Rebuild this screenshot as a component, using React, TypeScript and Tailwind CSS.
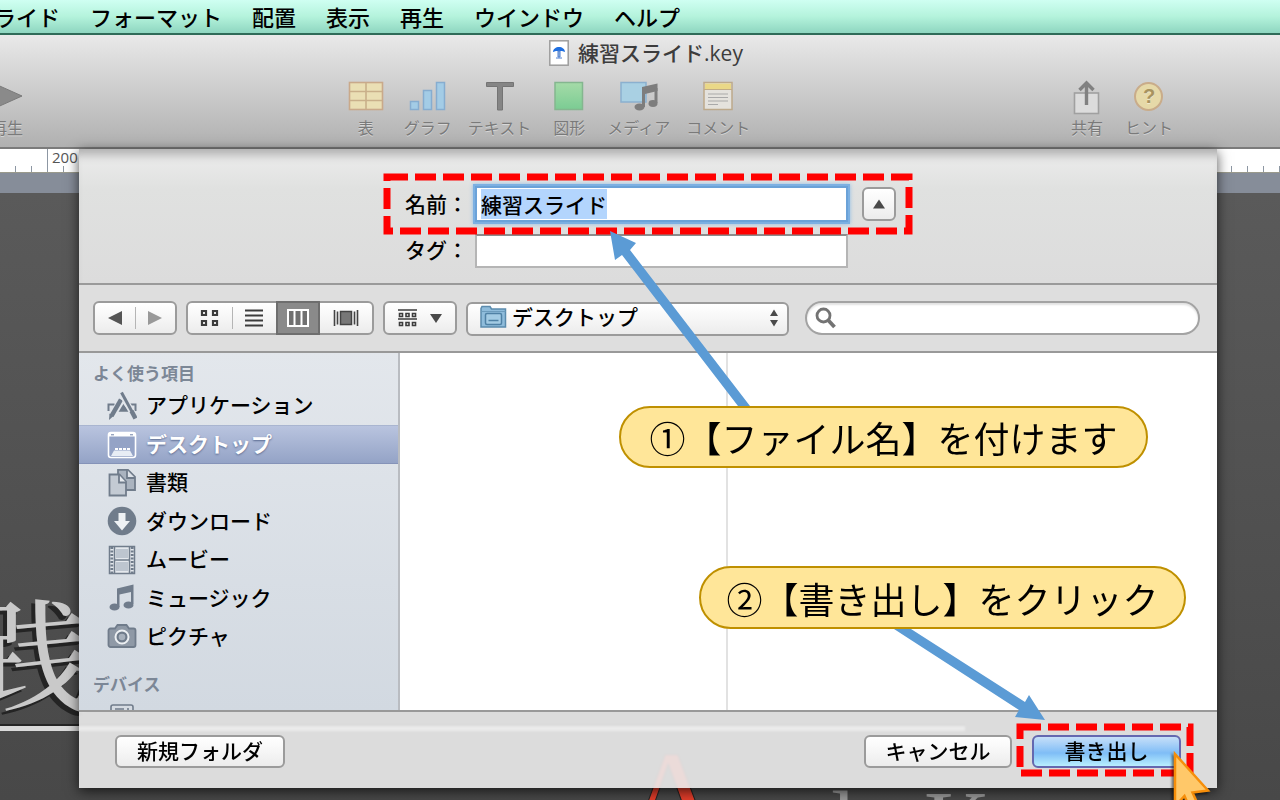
import { useEffect, useRef, useState } from 'react';
import type { ReactNode } from 'react';

const menus = ['スライド', 'フォーマット', '配置', '表示', '再生', 'ウインドウ', 'ヘルプ'];

const buttonStyle =
  'rounded-md border-2 border-[#9b9b9b] bg-linear-to-b from-white via-[#f6f6f6] to-[#ececec]';

function ToolItem({ label, children }: { label: string; children: ReactNode }) {
  return (
    <button className="flex min-w-11 flex-col items-center gap-[5px] text-base leading-5 text-[#7a7a7a] [text-shadow:0_1px_0_#ffffff70]">
      <span className="flex h-8 items-center justify-center">{children}</span>
      {label}
    </button>
  );
}

function TableIcon() {
  return (
    <svg width="36" height="32" viewBox="0 0 36 32">
      <rect x="1.5" y="2.5" width="33" height="27" fill="#eadfb4" stroke="#c9a98a" strokeWidth="1.6" />
      <path d="M2 11.5h32M2 20.5h32M18 3v26" stroke="#c9b08a" strokeWidth="1.6" />
    </svg>
  );
}

function ChartIcon() {
  return (
    <svg width="38" height="32" viewBox="0 0 38 32" fill="#a3cce6" stroke="#86add0" strokeWidth="1.5">
      <rect x="1.5" y="21.5" width="8" height="8" />
      <rect x="14.5" y="10.5" width="8" height="19" />
      <rect x="27.5" y="2.5" width="8" height="27" />
    </svg>
  );
}

function MediaIcon() {
  return (
    <svg width="40" height="32" viewBox="0 0 40 32">
      <rect x="2" y="2.5" width="25" height="19.5" fill="#a9d0e3" stroke="#8bb0cf" strokeWidth="1.5" />
      <path d="M23 7 38.500 3.500V11L26 14V27h-3z" fill="#7d7d7d" />
      <path d="M35.500 8h3v15h-3z" fill="#7d7d7d" />
      <ellipse cx="20.500" cy="27" rx="5" ry="3.400" fill="#7d7d7d" />
      <ellipse cx="34" cy="23.500" rx="4.500" ry="3.400" fill="#7d7d7d" />
    </svg>
  );
}

function CommentIcon() {
  return (
    <svg width="32" height="32" viewBox="0 0 32 32">
      <rect x="2" y="2.500" width="28" height="27" fill="#e4e2dd" stroke="#bda98b" strokeWidth="1.500" />
      <rect x="3" y="3.500" width="26" height="5.500" fill="#ead887" />
      <path d="M2 9.500h28" stroke="#c2ac85" />
      <path d="M6 14h20M6 17.500h20M6 21h20M6 24.500h10" stroke="#a9a9a9" strokeWidth="1.200" />
    </svg>
  );
}

function ShareIcon() {
  return (
    <svg width="30" height="36" viewBox="0 0 30 36" className="-mb-1">
      <rect x="2.500" y="13" width="24" height="20.500" fill="#dcdcdc" stroke="#a0a0a0" strokeWidth="1.600" />
      <path d="M14.500 25V4M7.500 10l7-7 7 7" fill="none" stroke="#818181" strokeWidth="3.400" />
    </svg>
  );
}

function Toolbar() {
  return (
    <header className="border-b-2 border-[#7b7b7b] bg-linear-to-b from-[#e9e9e9] to-[#b0b0b0] pb-2.5">
      <div className="flex h-9 items-center justify-center gap-[9px] pl-3">
        <svg width="20" height="26" viewBox="0 0 20 26">
          <rect x="0.800" y="0.800" width="18.400" height="24.400" fill="#fff" stroke="#9d9d9d" strokeWidth="1.500" />
          <path d="M4 12c0-3 3-5 6-5s6 2 6 5l-3-1H7z" fill="#1f6fe0" />
          <path d="M9 11h2v6H9zM7 18h6" stroke="#4c7fd0" strokeWidth="1" fill="#9db8dc" />
        </svg>
        <h1 className="pb-0.5 text-[21px] leading-8 font-medium text-[#3c3c3c]">
          練習スライド<span className="font-['Open_Sans']">.key</span>
        </h1>
      </div>
      <div className="mt-[9px] -ml-[15px] flex pr-[107px]">
        <ToolItem label="再生">
          <svg width="36" height="32" viewBox="0 0 36 32">
            <path d="M4 3v26L33 16z" fill="#8a8a8a" stroke="#7a7a7a" />
          </svg>
        </ToolItem>
        <nav className="mx-auto flex gap-4">
          <ToolItem label="表"><TableIcon /></ToolItem>
          <ToolItem label="グラフ"><ChartIcon /></ToolItem>
          <ToolItem label="テキスト">
            <svg width="30" height="32" viewBox="0 0 30 32">
              <path d="M1.500 2.500h27v4h-11V30h-5V6.500h-11z" fill="#858585" stroke="#747474" />
            </svg>
          </ToolItem>
          <ToolItem label="図形">
            <svg width="30" height="32" viewBox="0 0 30 32">
              <defs>
                <linearGradient id="shape" x2="0" y2="1">
                  <stop stopColor="#a5dba8" />
                  <stop offset="1" stopColor="#7bcc93" />
                </linearGradient>
              </defs>
              <rect x="1" y="2.500" width="27.500" height="27" fill="url(#shape)" stroke="#84b68f" strokeWidth="1.500" />
            </svg>
          </ToolItem>
          <ToolItem label="メディア"><MediaIcon /></ToolItem>
          <ToolItem label="コメント"><CommentIcon /></ToolItem>
        </nav>
        <div className="flex gap-4">
          <ToolItem label="共有"><ShareIcon /></ToolItem>
          <ToolItem label="ヒント">
            <span className="flex size-[29px] items-center justify-center rounded-full border-2 border-[#c9ac8a] bg-[#e6d9a8] font-['Liberation_Sans'] text-xl font-bold text-[#a8935f]">
              ?
            </span>
          </ToolItem>
        </div>
      </div>
    </header>
  );
}

function Canvas() {
  return (
    <div className="absolute inset-0 flex flex-col overflow-hidden">
      <div className="relative h-6 border-b border-[#9a9a8c] bg-white pl-[47px]">
        <div className="h-full border-l border-[#8d97a3] pl-1 font-['Open_Sans'] text-[15px] leading-4 text-[#555]">200</div>
        <div className="absolute inset-x-0 bottom-0 h-1.5 bg-[repeating-linear-gradient(90deg,transparent_0_15px,#8d97a3_15px_16px)]" />
      </div>
      <div className="h-5 bg-[#868d99]" />
      <div className="relative flex-1 bg-linear-to-b from-[#5a5a5a] to-[#484848]">
        <div className="absolute top-[376px] -left-[31px] text-[122px] leading-[160px] font-medium text-[#c9c9c9] [font-family:'Noto_Serif_CJK_JP','Noto_Sans_CJK_JP',serif] [text-shadow:-4px_4px_0_#242424]">
          践
        </div>
        <div className="absolute top-[531px] left-0 h-[7px] w-[965px] border-t-2 border-[#262626] bg-[#dadada]" />
        <svg className="absolute inset-0 h-full w-full font-['Liberation_Serif']">
          <text x="622" y="654" fontSize="140" fill="#e23d2a" stroke="#242424">A</text>
          <text x="831" y="661" fontSize="92" fill="#9a9a9a">l</text>
          <text x="924" y="661" fontSize="92" fill="#9a9a9a">K</text>
        </svg>
      </div>
    </div>
  );
}

function DashedFrame() {
  return (
    <svg className="pointer-events-none absolute inset-0 h-full w-full overflow-visible p-[3px]">
      <rect width="100%" height="100%" fill="none" stroke="#ff0000" strokeWidth="7" strokeDasharray="21 7" />
    </svg>
  );
}

function NameFields() {
  const nameRef = useRef<HTMLInputElement>(null);
  const [name, setName] = useState('練習スライド');
  const [tag, setTag] = useState('');

  useEffect(() => {
    nameRef.current?.focus();
    nameRef.current?.select();
  }, []);

  return (
    <div className="border-b-2 border-[#9a9a9a] bg-linear-to-b from-[#ededed] via-[#e0e1e0] via-30% to-[#dcdcdc] pt-[25px] pb-[15px] shadow-[inset_0_12px_10px_-6px_#b0b0b0]">
      <div className="relative mx-auto flex h-[60px] w-[528px] items-center pl-[21px]">
        <label htmlFor="name" className="w-[70px] font-medium">名前：</label>
        <input
          id="name"
          ref={nameRef}
          value={name}
          onChange={(e) => setName(e.target.value)}
          className="h-9 w-[373px] border-2 border-[#6ba2d8] bg-white px-1 leading-7 font-medium shadow-[0_0_0_2px_#7cb0e2,0_0_4px_2px_#8fbce6] outline-none selection:bg-[#b3d5fd] selection:text-black"
        />
        <button aria-label="折りたたむ" className={`ml-3.5 flex size-[34px] items-center justify-center ${buttonStyle}`}>
          <svg width="12" height="10" viewBox="0 0 12 10"><path d="M0 9.500 6 .500l6 9z" fill="#4a4a4a" /></svg>
        </button>
        <DashedFrame />
      </div>
      <div className="mx-auto flex w-[528px] items-center pl-[21px]">
        <label htmlFor="tag" className="w-[70px] pb-0.5 font-medium">タグ：</label>
        <input
          id="tag"
          value={tag}
          onChange={(e) => setTag(e.target.value)}
          className="h-[34px] w-[373px] border-2 border-[#b5b5b5] border-t-[#8c8c8c] bg-white px-1 outline-none"
        />
      </div>
    </div>
  );
}

function BrowserBar() {
  return (
    <div className="flex gap-[9px] border-b-2 border-[#999] bg-[#dedede] py-4 pr-[17px] pl-3.5">
      <div className={`flex h-[34px] w-[84px] ${buttonStyle}`}>
        <button aria-label="戻る" className="flex flex-1 items-center justify-center">
          <svg width="14" height="14" viewBox="0 0 14 14"><path d="M14 0v14L0 7z" fill="#555" /></svg>
        </button>
        <span className="my-1 w-px bg-[#b5b5b5]" />
        <button aria-label="進む" className="flex flex-1 items-center justify-center">
          <svg width="14" height="14" viewBox="0 0 14 14"><path d="M0 0v14l14-7z" fill="#999" /></svg>
        </button>
      </div>
      <div className={`flex h-[34px] w-[188px] ${buttonStyle}`}>
        <button aria-label="アイコン" className="flex flex-1 items-center justify-center">
          <svg width="20" height="18" viewBox="0 0 20 18" fill="none" stroke="#3c3c3c" strokeWidth="2.200">
            <path d="M2 2h4v4H2zM13 2h4v4h-4zM2 12h4v4H2zM13 12h4v4h-4z" />
          </svg>
        </button>
        <span className="my-1 w-px bg-[#b5b5b5]" />
        <button aria-label="リスト" className="flex flex-1 items-center justify-center">
          <svg width="18" height="18" viewBox="0 0 18 18" stroke="#3c3c3c" strokeWidth="2">
            <path d="M0 1.500h18M0 6.500h18M0 11.500h18M0 16.500h18" />
          </svg>
        </button>
        <button aria-label="カラム" className="-my-0.5 flex w-11 items-center justify-center border-2 border-[#6e6e6e] bg-[#8a8a8a]">
          <svg width="22" height="18" viewBox="0 0 22 18" fill="#707070" stroke="#fff" strokeWidth="2">
            <path d="M1 1h20v16H1zM7.500 1v16M14.500 1v16" />
          </svg>
        </button>
        <button aria-label="カバーフロー" className="flex w-[52px] items-center justify-center">
          <svg width="26" height="18" viewBox="0 0 26 18">
            <rect x="7.500" y="2.500" width="11" height="13" fill="#777" stroke="#444" strokeWidth="1.500" />
            <path d="M1.500 1v16M4.500 2.500v13M21.500 2.500v13M24.500 1v16" stroke="#444" strokeWidth="1.600" />
          </svg>
        </button>
      </div>
      <button aria-label="並べ替え" className={`flex h-[34px] w-[74px] items-center justify-center gap-3 ${buttonStyle}`}>
        <svg width="20" height="18" viewBox="0 0 20 18" fill="none" stroke="#3c3c3c" strokeWidth="1.600">
          <path d="M0 1h19M0 10h19" />
          <path d="M1.500 4.500h3v3h-3zM8 4.500h3v3H8zM14.500 4.500h3v3h-3zM1.500 13.500h3v3h-3zM8 13.500h3v3H8zM14.500 13.500h3v3h-3z" />
        </svg>
        <svg width="12" height="9" viewBox="0 0 12 9"><path d="M0 0h12L6 9z" fill="#4a4a4a" /></svg>
      </button>
      <div className="relative h-[34px]">
        <select aria-label="場所" className={`h-[34px] w-[323px] appearance-none pb-1.5 pl-11 leading-6 font-medium text-black outline-none ${buttonStyle}`}>
          <option>デスクトップ</option>
        </select>
        <svg className="pointer-events-none absolute top-1 left-3.5" width="27" height="24" viewBox="0 0 27 24">
          <path d="M1 3.500 2 1.500h8l1.500 2.500H25.500v18H1z" fill="#8fbcdb" stroke="#5b8bad" strokeWidth="1.500" />
          <path d="M1.500 6.500h24" stroke="#6d9cbd" />
          <rect x="5.500" y="8.500" width="16" height="11" rx="1.500" fill="#a3cbe4" stroke="#4f81a5" strokeWidth="1.500" />
          <path d="M8.500 15.500h10" stroke="#4f81a5" strokeWidth="1.500" />
        </svg>
        <svg className="pointer-events-none absolute top-2 right-2.5" width="10" height="18" viewBox="0 0 10 18">
          <path d="M1 7h8L5 .500zM1 11h8l-4 6.500z" fill="#4a4a4a" />
        </svg>
      </div>
      <label className="ml-[7px] flex h-[34px] flex-1 items-center rounded-full border-2 border-[#a3a3a3] bg-white px-2 shadow-[inset_0_2px_2px_#e2e2e2]">
        <svg width="22" height="22" viewBox="0 0 22 22" fill="none" stroke="#737373">
          <circle cx="8.500" cy="8.500" r="6.500" strokeWidth="2.800" />
          <path d="m13 13 6.500 7" strokeWidth="3.800" />
        </svg>
        <input type="search" aria-label="検索" className="min-w-0 flex-1 bg-transparent px-2 leading-6 outline-none" />
      </label>
    </div>
  );
}

const iconInk = '#707c8b';

const places: { label: string; selected?: boolean; icon: ReactNode }[] = [
  {
    label: 'アプリケーション',
    icon: (
      <>
        <path d="M1.500 20v-6.500h6M28.500 20v-6.500h-6" fill="none" stroke={iconInk} strokeWidth="2" />
        <path d="M8 20h14M10.500 18.500h9l-4.500-6z" stroke={iconInk} fill={iconInk} strokeWidth="1.500" />
        <path d="M15 8.500 5 25" stroke="#e2e6eb" strokeWidth="7" />
        <path d="M14 8.500 4.500 25" stroke={iconInk} strokeWidth="4.500" />
        <path d="m2.500 22.500 4 2.500L2 29z" fill={iconInk} />
        <path d="M14.500 2 26.500 24" stroke="#e2e6eb" strokeWidth="6" />
        <path d="M14.500 1.500 26 22.500" stroke={iconInk} strokeWidth="3" />
        <path d="m24.500 20 4 7.500" stroke={iconInk} strokeWidth="4.500" />
      </>
    ),
  },
  {
    label: 'デスクトップ',
    selected: true,
    icon: (
      <>
        <rect x="1.500" y="2.500" width="27" height="25" rx="2.500" fill="#94a3c6" stroke="#fff" strokeWidth="1.600" />
        <path d="M2 3h26v3.500H2z" fill="#fff" />
        <path d="M4 4.800h3M23 4.800h3" stroke="#6d7fa6" />
        <path d="M4 26 7 20.500h16l3 5.500z" fill="#e8edf5" />
        <path d="M8 18h3v2H8zM12 18h3v2h-3zM16 18h3v2h-3zM20 18h3v2h-3z" fill="#fff" />
      </>
    ),
  },
  {
    label: '書類',
    icon: (
      <g stroke={iconInk} strokeWidth="1.800">
        <path d="M11 1.800h10l7 7V22H11z" fill="#aab3bf" />
        <path d="M20 2v8h8" fill="#dde2e8" />
        <path d="M2.500 6.500h10l6.500 7v14H2.500z" fill="#c3cad3" />
        <path d="M12 7v7.500h7" fill="#e6eaef" />
      </g>
    ),
  },
  {
    label: 'ダウンロード',
    icon: (
      <>
        <circle cx="15" cy="15" r="14.300" fill={iconInk} />
        <path d="M11.500 7h7v8h4.500l-8 9.500L7 15h4.500z" fill="#eef1f4" />
      </>
    ),
  },
  {
    label: 'ムービー',
    icon: (
      <>
        <rect x="2.500" y="1.500" width="25" height="27" fill="#e4e8ed" stroke={iconInk} strokeWidth="1.500" />
        <path d="M4.800 2v26M25.200 2v26" stroke={iconInk} strokeWidth="2.800" strokeDasharray="2 1.500" />
        <path d="M7.500 2v26M22.500 2v26M7 15h16" stroke={iconInk} strokeWidth="1.500" />
        <path d="M9 4h12v9H9zM9 17h12v9H9z" fill="#bdc5cf" />
      </>
    ),
  },
  {
    label: 'ミュージック',
    icon: (
      <g fill={iconInk}>
        <path d="M10 5.500 26.500 1.500V21H24V9l-11.500 2.500V24H10z" />
        <ellipse cx="7.500" cy="24" rx="5" ry="3.600" />
        <ellipse cx="21.500" cy="22" rx="5" ry="3.600" />
      </g>
    ),
  },
  {
    label: 'ピクチャ',
    icon: (
      <>
        <path
          d="M3.500 6.500H8L10.500 3h9L22 6.500h4.500a2 2 0 0 1 2 2V23a2 2 0 0 1-2 2h-23a2 2 0 0 1-2-2V8.500a2 2 0 0 1 2-2z"
          fill="#8f99a6"
          stroke={iconInk}
          strokeWidth="1.800"
        />
        <circle cx="15" cy="15" r="6.500" fill={iconInk} stroke="#edf0f3" strokeWidth="2" />
        <circle cx="15" cy="15" r="3.300" fill="#a8b1bc" />
      </>
    ),
  },
];

function Sidebar() {
  return (
    <aside className="w-[321px] overflow-hidden border-r-2 border-[#b9bcc1] bg-linear-to-b from-[#e3e7ec] to-[#d2d9e1]">
      <h2 className="pt-1.5 pl-3.5 text-[17px] leading-7 font-bold text-[#7c8796]">よく使う項目</h2>
      <ul className="grid h-[269px] grid-rows-7 font-medium">
        {places.map((place) => (
          <li key={place.label}>
            <a
              href="#"
              className={
                place.selected
                  ? 'flex h-full items-center gap-[9px] border-y border-t-[#a9b5d0] border-b-[#8593b8] bg-linear-to-b from-[#b9c4df] to-[#94a3c6] pl-7 font-bold text-white [text-shadow:0_1px_2px_#5a6a90]'
                  : 'flex h-full items-center gap-[9px] pl-7'
              }
            >
              <svg width="30" height="30" viewBox="0 0 30 30">{place.icon}</svg>
              <span className="pb-0.5">{place.label}</span>
            </a>
          </li>
        ))}
      </ul>
      <h2 className="pt-3.5 pl-3.5 text-[17px] leading-7 font-bold text-[#7c8796]">デバイス</h2>
      <svg className="mt-1.5 ml-[31px]" width="24" height="20" viewBox="0 0 24 20" fill="#d5dbe2" stroke={iconInk} strokeWidth="1.600">
        <rect x="1" y="1" width="22" height="18" rx="2" />
        <path d="M5 5h9M5 8h9M18 4v6" />
      </svg>
    </aside>
  );
}

function Footer() {
  return (
    <div className="flex items-center gap-5 border-t-2 border-[#999] bg-[#ececece6] pt-[23px] pr-9 pb-5 pl-9 backdrop-blur-[1px]">
      <button className={`h-[33px] w-[170px] pb-1 leading-6 font-medium ${buttonStyle}`}>新規フォルダ</button>
      <button className={`ml-auto h-[33px] w-[148px] pb-1 leading-6 font-medium ${buttonStyle}`}>キャンセル</button>
      <div className="relative flex">
        <button className="h-[33px] w-[149px] rounded-md border-2 border-[#6468b0] bg-linear-to-b from-[#c6dff8] via-[#7fbdf6] via-55% to-[#b9effe] pb-1 leading-6 font-medium">
          書き出し
        </button>
        <div className="absolute -top-[11px] -right-3 -bottom-2 -left-[15px]">
          <DashedFrame />
        </div>
        <svg className="absolute top-4 left-[141px] drop-shadow-[-2px_2px_1px_#00000080]" width="40" height="64" viewBox="0 0 40 64">
          <path d="M2 3v52l9.500-10 7 16 8-4-7-15.500L35 39.500z" fill="#ffc869" stroke="#f68e0a" strokeWidth="2.500" />
        </svg>
      </div>
    </div>
  );
}

function Callouts() {
  const bubble =
    'absolute z-10 flex items-center justify-center rounded-full border-2 border-[#bf9000] bg-[#ffe699] text-4xl whitespace-nowrap';
  return (
    <>
      <svg className="pointer-events-none absolute inset-0 z-10 h-full w-full" fill="#5b9bd5">
        <path d="M531 82 557 94 551 101 671 257 659 257 543 106 536 111z" />
        <path d="M966 571 950 546 946 553 832 480 815 480 940 561 936 568z" />
      </svg>
      <p className={`${bubble} top-[257px] right-[69px] h-[62px] w-[529px]`}>①【ファイル名】を付けます</p>
      <p className={`${bubble} top-[417px] right-[31px] h-[63px] w-[487px]`}>②【書き出し】をクリック</p>
    </>
  );
}

export default function App() {
  return (
    <div className="flex min-h-screen flex-col overflow-hidden bg-[#505050] text-[21px] text-black [font-family:'Noto_Sans_CJK_JP',sans-serif]">
      <nav className="flex h-[35px] items-center gap-[30px] overflow-hidden border-b-2 border-[#2f6b58] bg-linear-to-b from-[#cffff2] via-[#b4f3dc] to-[#8ed6c0] pb-0.5 text-[22px] font-medium whitespace-nowrap">
        {menus.map((menu) => (
          <a key={menu} href="#" className="leading-7 first:-ml-7">{menu}</a>
        ))}
      </nav>
      <Toolbar />
      <main className="relative flex-1">
        <Canvas />
        <section className="relative mr-[63px] ml-[79px] shadow-[0_3px_12px_#000000b0]">
          <NameFields />
          <BrowserBar />
          <div className="flex h-[357px] bg-white">
            <Sidebar />
            <div className="w-[328px] border-r-2 border-[#e2e2e2]" />
          </div>
          <Callouts />
          <Footer />
        </section>
      </main>
    </div>
  );
}
